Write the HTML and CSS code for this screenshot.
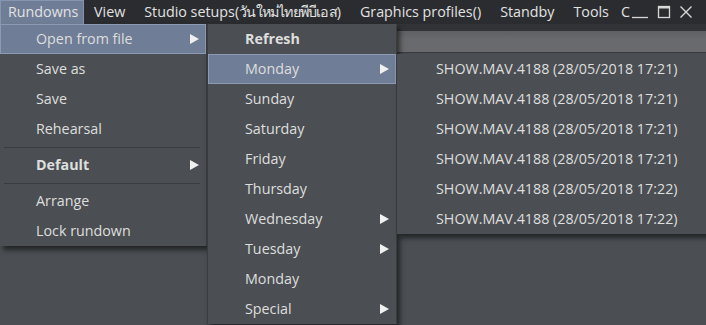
FILE: index.html
```html
<!DOCTYPE html>
<html>
<head>
<meta charset="utf-8">
<link rel="stylesheet" href="styles.css">
</head>
<body>
<div class="menubar">
  <div class="mb-item active">Rundowns</div>
  <div class="mb-item">View</div>
  <div class="mb-item">Studio setups(<span class="thai">วันใหม่ไทยพีบีเอส</span>)</div>
  <div class="mb-item">Graphics profiles()</div>
  <div class="mb-item">Standby</div>
  <div class="mb-item">Tools</div>
  <div class="mb-item cut">C</div>
  <div class="winbtns">
    <svg width="18" height="14" viewBox="0 0 18 14"><path d="M1 12.5H17" stroke="#d8d8d8" stroke-width="1.3"/></svg>
    <svg width="14" height="14" viewBox="0 0 14 14"><rect x="1.5" y="1.5" width="11" height="11" fill="none" stroke="#d8d8d8" stroke-width="1.3"/><path d="M1.5 2.5H12.5" stroke="#d8d8d8" stroke-width="2"/></svg>
    <svg width="14" height="14" viewBox="0 0 14 14"><path d="M1.5 1.5L12.5 12.5M12.5 1.5L1.5 12.5" stroke="#d8d8d8" stroke-width="1.4"/></svg>
  </div>
</div>
<div class="app">
  <div class="gap"></div>
  <div class="strip"></div>
  <div class="work"></div>
</div>

<div class="menu m1">
  <div class="mi hl">Open from file<span class="arr"></span></div>
  <div class="mi">Save as</div>
  <div class="mi">Save</div>
  <div class="mi">Rehearsal</div>
  <div class="sep"></div>
  <div class="mi bold">Default<span class="arr"></span></div>
  <div class="sep"></div>
  <div class="mi">Arrange</div>
  <div class="mi">Lock rundown</div>
</div>

<div class="menu m2">
  <div class="mi bold">Refresh</div>
  <div class="mi hl">Monday<span class="arr"></span></div>
  <div class="mi">Sunday</div>
  <div class="mi">Saturday</div>
  <div class="mi">Friday</div>
  <div class="mi">Thursday</div>
  <div class="mi">Wednesday<span class="arr"></span></div>
  <div class="mi">Tuesday<span class="arr"></span></div>
  <div class="mi">Monday</div>
  <div class="mi">Special<span class="arr"></span></div>
</div>

<div class="menu m3">
  <div class="mi">SHOW.MAV.4188 (28/05/2018 17:21)</div>
  <div class="mi">SHOW.MAV.4188 (28/05/2018 17:21)</div>
  <div class="mi">SHOW.MAV.4188 (28/05/2018 17:21)</div>
  <div class="mi">SHOW.MAV.4188 (28/05/2018 17:21)</div>
  <div class="mi">SHOW.MAV.4188 (28/05/2018 17:22)</div>
  <div class="mi">SHOW.MAV.4188 (28/05/2018 17:22)</div>
</div>
</body>
</html>
```
FILE: styles.css
```css
* { box-sizing: border-box; }
html, body {
  margin: 0;
  padding: 0;
  width: 706px;
  height: 325px;
  overflow: hidden;
  background: #4b4f53;
  font-family: "Open Sans", "Noto Sans", "DejaVu Sans", sans-serif;
  font-size: 14.3px;
  color: #dcdcdc;
}
.menubar {
  display: flex;
  align-items: stretch;
  height: 24px;
  background: #2a2c2f;
  white-space: nowrap;
}
.mb-item {
  padding: 0 9px 0 10px;
  line-height: 23px;
  color: #e2e2e2;
}
.thai { letter-spacing: -0.8px; }
.mb-item.active {
  background: #6f7d96;
  border: 1px solid #8796b0;
  border-bottom: none;
  line-height: 22px;
  padding: 0 7px 0 7px;
  width: 84px;
}
.mb-item.cut {
  width: 10px;
  overflow: hidden;
  padding: 0;
  margin-left: 3px;
}
.winbtns {
  display: flex;
  align-items: center;
  gap: 8px;
  padding-left: 0;
}
.app {
  display: flex;
  flex-direction: column;
  height: 301px;
}
.gap { height: 7px; background: #313336; }
.strip {
  height: 22px;
  background: linear-gradient(#5e6063, #686a6d 40%);
  border-bottom: 1px solid #3a3d40;
}
.work { flex: 1; background: #4b4f53; }

.menu {
  position: absolute;
  background: #4b4f53;
  box-shadow: 3px 4px 5px rgba(0,0,0,0.55);
}
.m1 { left: 0; top: 24px; width: 207px; height: 222px; border-right: 1px solid #3a3c3f; }
.m2 { left: 207px; top: 24px; width: 190px; height: 300px; border-right: 1px solid #3a3c3f; border-left: 1px solid #3a3c3f; }
.m3 { left: 397px; top: 54px; width: 320px; height: 180px; }
.mi {
  position: relative;
  height: 30px;
  line-height: 30px;
  padding-left: 36px;
  white-space: nowrap;
  color: #dedede;
}
.m2 .mi { padding-left: 37px; }
.m3 .mi { padding-left: 39px; }
.mi.hl {
  background: #6f7d96;
  border: 1px solid #8c9ab3;
  line-height: 28px;
  padding-left: 35px;
}
.m2 .mi.hl { padding-left: 36px; }
.mi.bold { font-weight: 700; }
.sep {
  height: 1px;
  background: #3b3e41;
  margin: 3px 6px 2px 4px;
}
.arr {
  position: absolute;
  right: 7px;
  top: 50%;
  margin-top: -5px;
  width: 0;
  height: 0;
  border-left: 9px solid #f0f0f0;
  border-top: 5px solid transparent;
  border-bottom: 5px solid transparent;
}
.mi.hl .arr { right: 6px; }
```
